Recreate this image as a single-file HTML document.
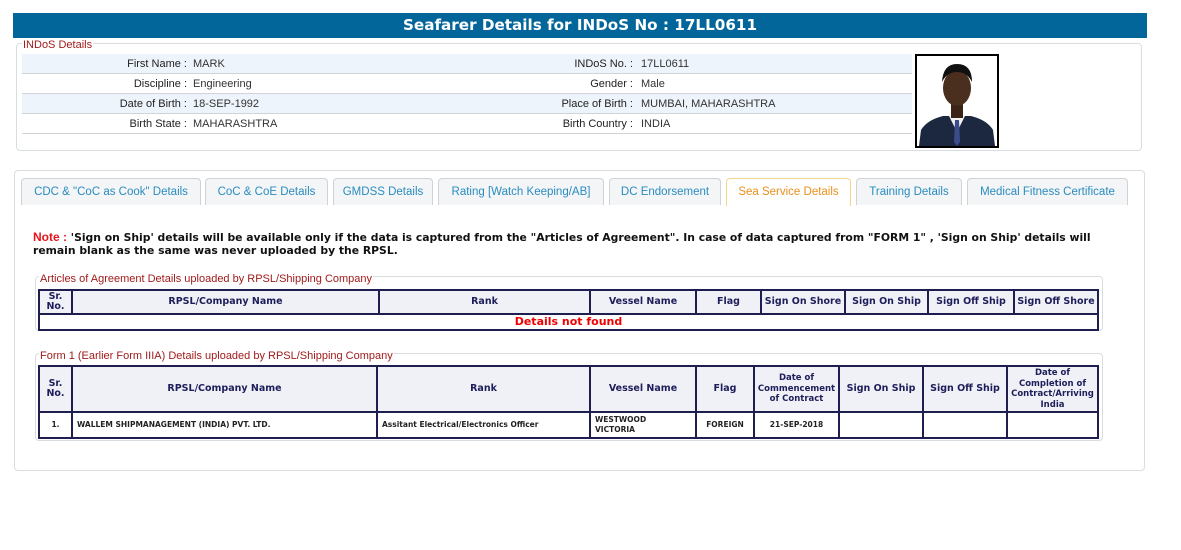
<!DOCTYPE html>
<html><head><style>
*{box-sizing:border-box;margin:0;padding:0}
body{width:1181px;height:550px;background:#fff;position:relative;font-family:"Liberation Sans",Arial,sans-serif;overflow:hidden}
.abs{position:absolute}
.hdr{left:13px;top:13px;width:1134px;height:25px;background:#03669a;color:#fff;font:bold 15.2px "DejaVu Sans",sans-serif;text-align:center;line-height:25px}
.fs{border:1px solid #d8dde2;border-radius:4px}
.lg{background:#fff;color:#a11b1b;font-size:11px;padding:0 1px;line-height:12px}
.row{left:22px;width:890px;height:20px;border-bottom:1px solid #d0d4d8;font-size:11px;color:#333;line-height:20px}
.row.b{background:#eef4fb}
.row span{position:absolute}
.l{text-align:right;width:200px;color:#222}
.tab{top:178px;height:27px;border:1px solid #cfd3d6;border-bottom:none;border-radius:4px 4px 0 0;background:#f4f5f6;color:#2a8cc0;font-size:11.5px;text-align:center;line-height:26px}
.tab.act{background:#fff;border-color:#f2d58a;color:#eb8f1c;height:28px}
.note{left:33px;top:231px;font:bold 10.8px "DejaVu Sans",sans-serif;color:#111;line-height:13px;width:1070px}
table{position:absolute;border-collapse:collapse;font-family:"DejaVu Sans",sans-serif;font-weight:bold;table-layout:fixed}
td{border:2px solid #1e1e4f;text-align:center;color:#1e1e5a;font-size:9.5px;line-height:10.5px;padding:0;overflow:hidden;white-space:nowrap}
tr.h td{background:#f0f1f7}
tr.d td{font-size:7.5px;color:#222}
</style></head><body>
<div class="abs hdr">Seafarer Details for INDoS No : 17LL0611</div>

<div class="abs fs" style="left:16px;top:43px;width:1126px;height:108px"></div>
<div class="abs lg" style="left:22px;top:39px">INDoS Details</div>
<div class="abs row b" style="top:54px"><span class="l" style="left:-35px">First Name :</span><span style="left:171px">MARK</span><span class="l" style="left:411px">INDoS No. :</span><span style="left:619px">17LL0611</span></div>
<div class="abs row" style="top:74px"><span class="l" style="left:-35px">Discipline :</span><span style="left:171px">Engineering</span><span class="l" style="left:411px">Gender :</span><span style="left:619px">Male</span></div>
<div class="abs row b" style="top:94px"><span class="l" style="left:-35px">Date of Birth :</span><span style="left:171px">18-SEP-1992</span><span class="l" style="left:411px">Place of Birth :</span><span style="left:619px">MUMBAI, MAHARASHTRA</span></div>
<div class="abs row" style="top:114px"><span class="l" style="left:-35px">Birth State :</span><span style="left:171px">MAHARASHTRA</span><span class="l" style="left:411px">Birth Country :</span><span style="left:619px">INDIA</span></div>
<svg class="abs" style="left:915px;top:54px" width="84" height="94" viewBox="0 0 84 94">
<rect x="1" y="1" width="82" height="92" fill="#fff" stroke="#000" stroke-width="2"/>
<path d="M4 92 L6 76 Q12 66 28 62 L56 62 Q72 66 78 76 L80 92Z" fill="#1c2740"/>
<path d="M34 62 L42 78 L50 62Z" fill="#f2f2f2"/>
<path d="M40 66 L44 66 L45 88 L42 92 L39 88Z" fill="#3a4d8a"/>
<rect x="36" y="48" width="12" height="16" fill="#3a2418"/>
<ellipse cx="42" cy="34" rx="14" ry="18" fill="#4a2e1e"/>
<path d="M27 28 Q28 10 42 10 Q57 10 57 28 Q52 18 42 18 Q32 18 27 28Z" fill="#111"/>
</svg>

<div class="abs fs" style="left:14px;top:170px;width:1131px;height:301px"></div>
<div class="abs tab" style="left:21px;width:180px">CDC &amp; "CoC as Cook" Details</div>
<div class="abs tab" style="left:205px;width:123px">CoC &amp; CoE Details</div>
<div class="abs tab" style="left:333px;width:100px">GMDSS Details</div>
<div class="abs tab" style="left:438px;width:166px">Rating [Watch Keeping/AB]</div>
<div class="abs tab" style="left:609px;width:112px">DC Endorsement</div>
<div class="abs tab act" style="left:726px;width:125px">Sea Service Details</div>
<div class="abs tab" style="left:856px;width:106px">Training Details</div>
<div class="abs tab" style="left:967px;width:161px">Medical Fitness Certificate</div>

<div class="abs note"><span style="color:#e8141b;font-family:'Liberation Sans',sans-serif;font-size:12px">Note :</span> 'Sign on Ship' details will be available only if the data is captured from the "Articles of Agreement". In case of data captured from "FORM 1" , 'Sign on Ship' details will remain blank as the same was never uploaded by the RPSL.</div>

<div class="abs fs" style="left:35px;top:276px;width:1068px;height:55px"></div>
<div class="abs lg" style="left:39px;top:273px">Articles of Agreement Details uploaded by RPSL/Shipping Company</div>
<table style="left:38px;top:289px;width:1061px">
<colgroup><col style="width:33px"><col style="width:307px"><col style="width:211px"><col style="width:106px"><col style="width:65px"><col style="width:84px"><col style="width:83px"><col style="width:86px"><col></colgroup>
<tr class="h" style="height:24px"><td>Sr.<br>No.</td><td>RPSL/Company Name</td><td>Rank</td><td>Vessel Name</td><td>Flag</td><td>Sign On Shore</td><td>Sign On Ship</td><td>Sign Off Ship</td><td>Sign Off Shore</td></tr>
<tr style="height:16px;background:#fff"><td colspan="9" style="color:#e00;font-size:11px">Details not found</td></tr>
</table>

<div class="abs fs" style="left:35px;top:353px;width:1068px;height:88px"></div>
<div class="abs lg" style="left:39px;top:350px">Form 1 (Earlier Form IIIA) Details uploaded by RPSL/Shipping Company</div>
<table style="left:38px;top:365px;width:1061px">
<colgroup><col style="width:33px"><col style="width:305px"><col style="width:213px"><col style="width:106px"><col style="width:58px"><col style="width:85px"><col style="width:84px"><col style="width:84px"><col></colgroup>
<tr class="h" style="height:46px"><td>Sr.<br>No.</td><td>RPSL/Company Name</td><td>Rank</td><td>Vessel Name</td><td>Flag</td><td style="font-size:8.5px">Date of<br>Commencement<br>of Contract</td><td>Sign On Ship</td><td>Sign Off Ship</td><td style="font-size:8.5px">Date of<br>Completion of<br>Contract/Arriving<br>India</td></tr>
<tr class="d" style="height:26px;background:#fff"><td>1.</td><td style="text-align:left;padding-left:4px">WALLEM SHIPMANAGEMENT (INDIA) PVT. LTD.</td><td style="text-align:left;padding-left:4px">Assitant Electrical/Electronics Officer</td><td style="text-align:left;padding-left:4px">WESTWOOD<br>VICTORIA</td><td>FOREIGN</td><td>21-SEP-2018</td><td></td><td></td><td></td></tr>
</table>
</body></html>
